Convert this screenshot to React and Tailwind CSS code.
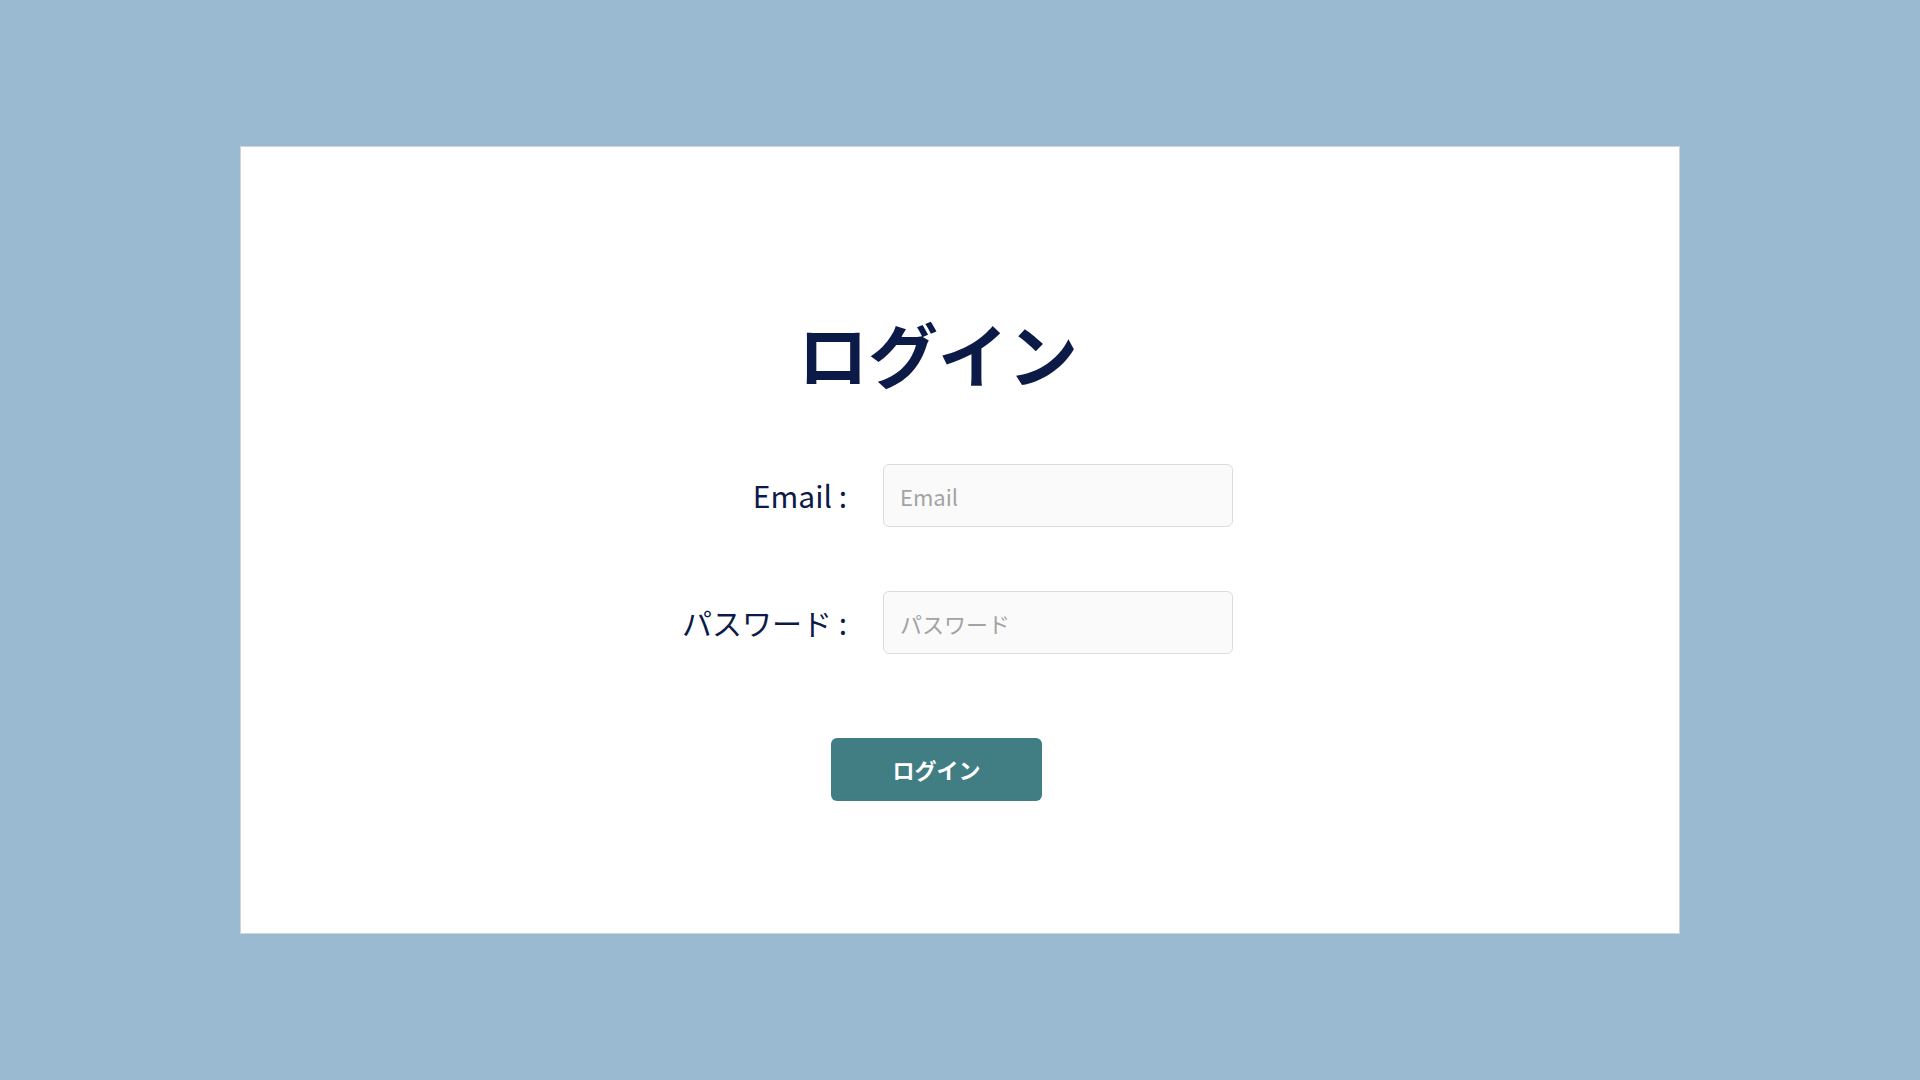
import React, { useState } from 'react';

const font = { fontFamily: '"Noto Sans CJK JP", "Noto Sans", sans-serif' };

const LoginPage = () => {
    const [email, setEmail] = useState('');
    const [password, setPassword] = useState('');

    return (
        <div className="h-screen w-full bg-[#99bad1] px-[240px] py-[146px]" style={font}>
            <div className="h-full bg-white border border-[#cfd5db] flex flex-col items-center pt-[171px] pr-[40px]">
                <h1 className="mr-[4px] text-[70px] leading-none font-bold text-[#0c1a47]">ログイン</h1>

                <form className="mt-[76px] grid grid-cols-[200px_350px] gap-x-[36px] gap-y-[64px]" onSubmit={(e) => e.preventDefault()}>
                    <label htmlFor="email" className="self-center text-right text-[30px] text-[#0c1a47]">Email :</label>
                    <input
                        id="email"
                        type="email"
                        value={email}
                        onChange={(e) => setEmail(e.target.value)}
                        placeholder="Email"
                        className="h-[63px] rounded-md border border-[#dcdcdc] bg-[#fafafa] px-4 text-[22px] text-gray-700 placeholder:text-[#a3a3a3] outline-none"
                    />

                    <label htmlFor="password" className="self-center text-right text-[30px] text-[#0c1a47]">パスワード :</label>
                    <input
                        id="password"
                        type="password"
                        value={password}
                        onChange={(e) => setPassword(e.target.value)}
                        placeholder="パスワード"
                        className="h-[63px] rounded-md border border-[#dcdcdc] bg-[#fafafa] px-4 text-[22px] text-gray-700 placeholder:text-[#a3a3a3] outline-none"
                    />
                </form>

                <button type="submit" className="mt-[84px] mr-[7px] w-[211px] h-[63px] rounded-md bg-[#417e83] text-white text-[22px] font-bold">
                    ログイン
                </button>
            </div>
        </div>
    );
};

export default LoginPage;
